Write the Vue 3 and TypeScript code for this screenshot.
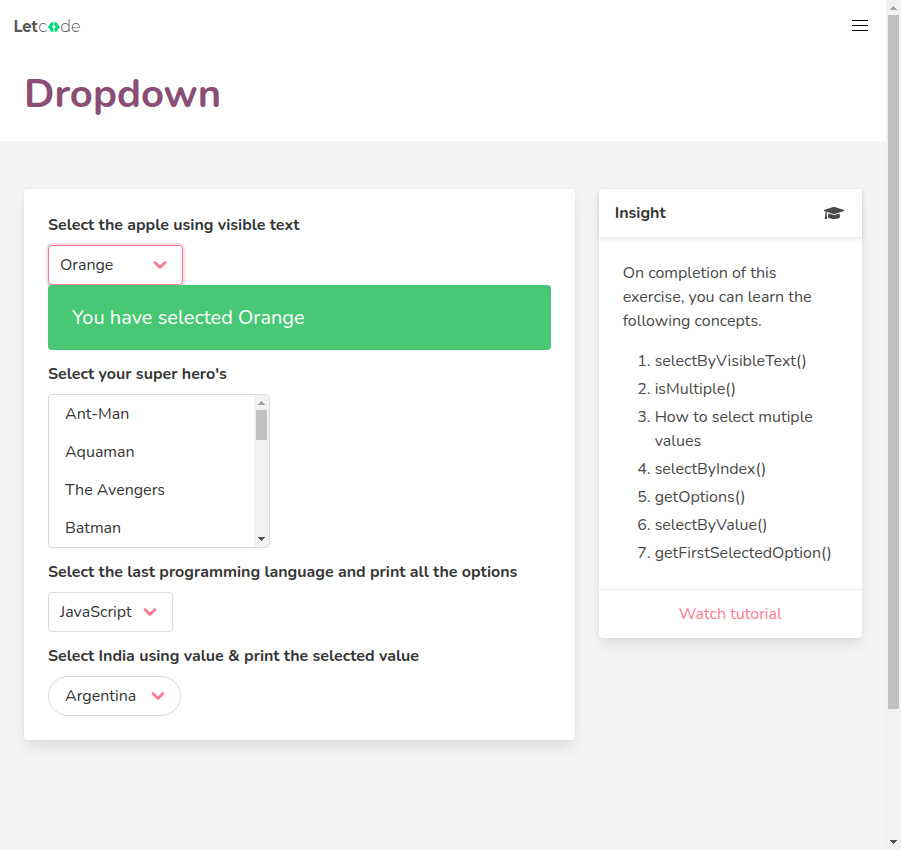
<script setup lang="ts">
import { ref } from 'vue'

const heroes: string[] = ['Ant-Man', 'Aquaman', 'The Avengers', 'Batman']

const concepts: string[] = [
  'selectByVisibleText()',
  'isMultiple()',
  'How to select mutiple values',
  'selectByIndex()',
  'getOptions()',
  'selectByValue()',
  'getFirstSelectedOption()',
]

const fruit = ref('Orange')
const language = ref('JavaScript')
const country = ref('Argentina')
</script>

<template>
  <div class="window">
    <div class="page">
      <header class="hero">
        <nav class="navbar">
          <svg class="logo" width="74" height="30" viewBox="0 0 74 30">
            <text class="logo-bold" x="0.4" y="20" textLength="24.4" lengthAdjust="spacingAndGlyphs">Let</text>
            <text class="logo-light" x="25.2" y="20" textLength="9" lengthAdjust="spacingAndGlyphs">c</text>
            <path d="M35.2 15 38.4 10.6 40.2 10.6 40.2 13.2 38.8 15 40.2 16.8 40.2 19.4 38.4 19.4zM46.6 15 43.4 10.6 41.6 10.6 41.6 13.2 43 15 41.6 16.8 41.6 19.4 43.4 19.4z" />
            <text class="logo-light" x="47.2" y="20" textLength="20.4" lengthAdjust="spacingAndGlyphs">de</text>
          </svg>
          <div class="burger"><span></span><span></span><span></span></div>
        </nav>
        <h1 class="title">Dropdown</h1>
      </header>

      <main class="columns">
        <section class="card form">
          <label class="label">Select the apple using visible text</label>
          <div class="select focused fruits">
            <span>{{ fruit }}</span>
            <svg class="chevron" width="14" height="10" viewBox="0 0 14 10"><path d="M2 2.6 7 7.4 12 2.6" /></svg>
          </div>
          <div class="notification"><p>You have selected {{ fruit }}</p></div>

          <label class="label">Select your super hero's</label>
          <div class="listbox">
            <ul>
              <li v-for="hero in heroes" :key="hero">{{ hero }}</li>
            </ul>
            <div class="scrollbar">
              <svg width="15" height="15" viewBox="0 0 15 15"><path class="dim" d="M4 10h7v-1h-1v-1h-1v-1h-1v-1h-1v1h-1v1h-1v1h-1z" /></svg>
              <div class="thumb short"></div>
              <svg class="down" width="15" height="15" viewBox="0 0 15 15"><path d="M4 5h7v1h-1v1h-1v1h-1v1h-1v-1h-1v-1h-1v-1h-1z" /></svg>
            </div>
          </div>

          <label class="label">Select the last programming language and print all the options</label>
          <div class="select languages">
            <span>{{ language }}</span>
            <svg class="chevron" width="14" height="10" viewBox="0 0 14 10"><path d="M2 2.6 7 7.4 12 2.6" /></svg>
          </div>

          <label class="label">Select India using value &amp; print the selected value</label>
          <div class="select rounded">
            <span>{{ country }}</span>
            <svg class="chevron" width="14" height="10" viewBox="0 0 14 10"><path d="M2 2.6 7 7.4 12 2.6" /></svg>
          </div>
        </section>

        <aside class="card insight">
          <header class="card-header">
            <p>Insight</p>
            <svg width="20" height="16" viewBox="0 0 640 512">
              <path d="M622.34 153.2L343.4 67.5c-15.2-4.67-31.6-4.67-46.79 0L17.66 153.2c-23.54 7.23-23.54 38.36 0 45.59l48.63 14.94c-10.67 13.19-17.23 29.28-17.88 46.9C38.78 266.15 32 276.11 32 288c0 10.78 5.68 19.85 13.86 25.65L20.33 428.53C18.11 438.52 25.71 448 35.94 448h56.11c10.24 0 17.84-9.48 15.62-19.47L82.14 313.65C90.32 307.85 96 298.78 96 288c0-11.57-6.47-21.25-15.66-26.87.76-15.02 8.44-28.3 20.69-36.72L296.6 284.5c9.06 2.78 26.44 6.25 46.79 0l278.95-85.7c23.55-7.24 23.55-38.36 0-45.6zM352.79 315.09c-28.53 8.76-52.84 3.92-65.59 0l-145.02-44.55L128 384c0 35.35 85.96 64 192 64s192-28.65 192-64l-14.18-113.47-145.03 44.56z" />
            </svg>
          </header>
          <div class="content">
            <p>On completion of this exercise, you can learn the following concepts.</p>
            <ol>
              <li v-for="item in concepts" :key="item">{{ item }}</li>
            </ol>
          </div>
          <footer class="card-footer"><a>Watch tutorial</a></footer>
        </aside>
      </main>
    </div>

    <div class="scrollbar">
      <svg width="15" height="15" viewBox="0 0 15 15"><path class="dim" d="M4 10h7v-1h-1v-1h-1v-1h-1v-1h-1v1h-1v1h-1v1h-1z" /></svg>
      <div class="thumb tall"></div>
      <svg class="down" width="15" height="15" viewBox="0 0 15 15"><path d="M4 5h7v1h-1v1h-1v1h-1v1h-1v-1h-1v-1h-1v-1h-1z" /></svg>
    </div>
  </div>
</template>

<style>
body {
  margin: 0;
  overflow: hidden;
}
</style>

<style scoped>
* {
  box-sizing: border-box;
}
.window {
  display: flex;
  width: 901px;
  height: 850px;
  font: 16px/24px Nunito, Lato, sans-serif;
  color: #4a4a4a;
  background: #f4f4f4;
}
p, h1, ul, ol {
  margin: 0;
  padding: 0;
}
.page {
  flex: 1;
}
.hero {
  height: 141px;
  background: #fff;
}
.navbar {
  display: flex;
  justify-content: space-between;
  height: 52px;
  padding: 12px 18px 0 13px;
}
.logo {
  font-family: Montserrat, Nunito, sans-serif;
  font-size: 16.5px;
  fill: #58595b;
  overflow: visible;
}
.logo-bold {
  font-weight: 700;
}
.logo-light {
  font-weight: 300;
}
.logo path {
  fill: #00d97e;
  stroke: #00d97e;
  stroke-width: 0.5;
  stroke-linejoin: round;
}
.burger {
  display: flex;
  flex-direction: column;
  gap: 4px;
  width: 16px;
  padding-top: 8px;
}
.burger span {
  height: 1px;
  background: #0a0a0a;
}
.title {
  padding: 16px 24px 0;
  font-size: 40px;
  line-height: 52px;
  font-weight: 700;
  color: #8a4d76;
  white-space: nowrap;
}
.columns {
  display: flex;
  align-items: flex-start;
  gap: 24px;
  padding: 48px 24px;
}
.card {
  background: #fff;
  border-radius: 4px;
  box-shadow: 0 8px 16px -2px rgba(10, 10, 10, 0.1), 0 0 0 1px rgba(10, 10, 10, 0.02);
}
.form {
  width: 550.67px;
  height: 551px;
  padding: 24px 23.67px 24px 24px;
}
.label {
  display: block;
  margin-bottom: 8px;
  font-weight: 700;
  color: #363636;
  white-space: nowrap;
}
.select {
  display: flex;
  align-items: center;
  justify-content: space-between;
  height: 40px;
  padding: 0 15px 0 11px;
  border: 1px solid #dbdbdb;
  border-radius: 4px;
  color: #363636;
  white-space: nowrap;
}
.fruits {
  width: 135px;
}
.focused {
  border-color: #ff7b92;
  box-shadow: 0 0 0 2px rgba(255, 123, 146, 0.25);
}
.languages {
  width: 125px;
  margin-bottom: 12px;
}
.rounded {
  width: 133px;
  padding-left: 16px;
  border-radius: 20px;
}
.chevron {
  fill: none;
  stroke: #ff7b92;
  stroke-width: 2.8;
  stroke-linecap: round;
  stroke-linejoin: round;
}
.notification {
  position: relative;
  height: 65px;
  margin-bottom: 12px;
  padding: 18px 24px;
  border-radius: 4px;
  background: #48c774;
  color: #fff;
  font-size: 20px;
  line-height: 30px;
}
.listbox {
  display: flex;
  width: 222px;
  height: 154px;
  margin-bottom: 12px;
  border: 1px solid #dbdbdb;
  border-radius: 4px;
  overflow: hidden;
  color: #363636;
}
.listbox ul {
  flex: 1;
  list-style: none;
}
.listbox li {
  height: 38px;
  padding: 7px 16px;
}
.scrollbar {
  display: flex;
  flex-direction: column;
  width: 15px;
  background: #f1f1f1;
  fill: #505050;
}
.scrollbar svg {
  display: block;
  flex: none;
}
.scrollbar .dim {
  fill: #a3a3a3;
}
.scrollbar .down {
  margin-top: auto;
}
.thumb {
  width: 11px;
  margin-left: 2px;
  background: #c1c1c1;
}
.short {
  height: 30px;
}
.tall {
  height: 694px;
}
.insight {
  width: 263.33px;
  height: 449px;
}
.card-header {
  display: flex;
  align-items: center;
  justify-content: space-between;
  height: 48px;
  padding: 0 18px 0 16px;
  font-weight: 700;
  color: #363636;
  box-shadow: 0 2px 4px rgba(10, 10, 10, 0.1);
}
.card-header svg {
  fill: #4a4a4a;
}
.content {
  height: 352px;
  padding: 24px;
}
.content ol {
  margin: 16px 0 0 32px;
  list-style: decimal outside;
}
.content li {
  margin-right: -4px;
}
.content li + li {
  margin-top: 4px;
}
.card-footer {
  height: 49px;
  padding-top: 12px;
  border-top: 1px solid #ededed;
  text-align: center;
  color: #ff7b92;
}
</style>
